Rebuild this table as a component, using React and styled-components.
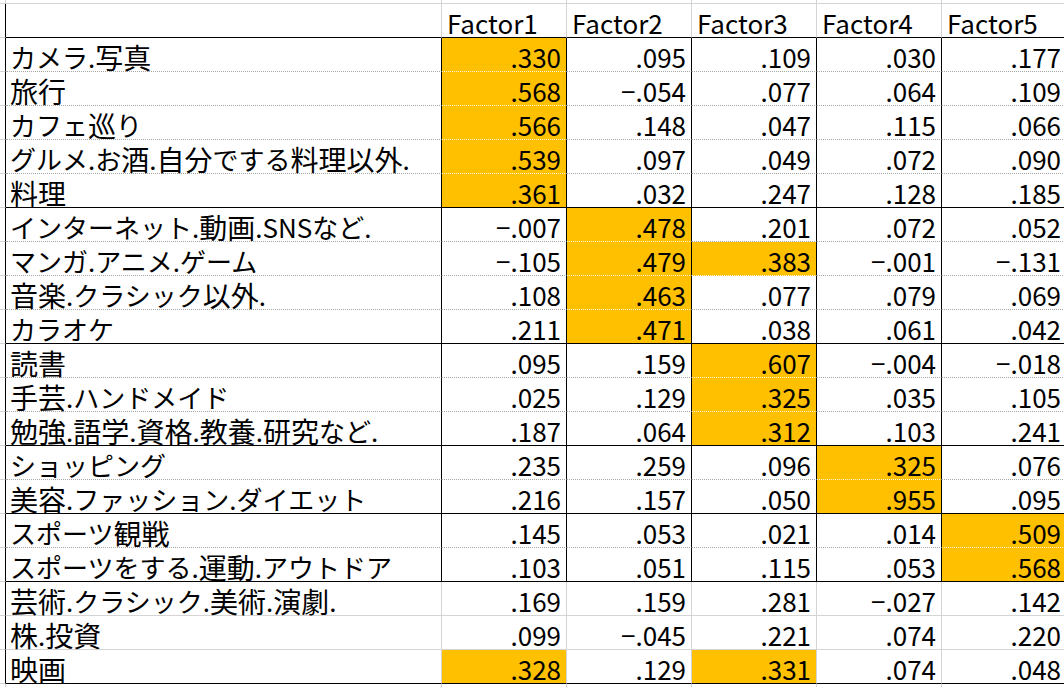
import React from 'react';
import styled, { createGlobalStyle } from 'styled-components';

const Global = createGlobalStyle`
  html, body {
    margin: 0;
    padding: 0;
    background: #fff;
    overflow: hidden;
  }
`;

const GRID = '#d4d4d4';
const DOT = '#a6a6a6';
const GOLD = '#ffc000';

const lineColor = {
  black: '#000',
  gray: GRID,
  dotted: DOT,
};

const Sheet = styled.div`
  width: 1064px;
  height: 687px;
  overflow: hidden;
  display: grid;
  grid-template-columns: 6px 436px repeat(5, 125px);
  grid-template-rows: 4px;
  grid-auto-rows: 34px;
  font-family: 'Noto Sans CJK JP', 'Noto Sans', sans-serif;
  font-size: 26px;
  color: #000;
`;

const Cell = styled.div`
  box-sizing: border-box;
  display: flex;
  align-items: center;
  overflow: visible;
  white-space: nowrap;
  line-height: 1;
  background: ${(p) => (p.$hl ? GOLD : '#fff')};
  border-right: 1px solid ${(p) => lineColor[p.$v || 'gray']};
  border-bottom: 1px ${(p) => (p.$h === 'dotted' ? 'dotted' : 'solid')}
    ${(p) => (p.$h === 'dotted' && p.$hl ? '#fff6dc' : lineColor[p.$h || 'gray'])};
`;

const EdgeCell = styled(Cell)`
  border-bottom-style: solid;
  border-bottom-color: ${GRID};
`;

const HeadCell = styled(Cell)`
  padding: 4px 0 0 5px;
`;

const LabelCell = styled(Cell)`
  padding: 4px 0 0 4px;
`;

const Kanji = styled.span`
  font-size: 28px;
`;

const NumCell = styled(Cell)`
  justify-content: flex-end;
  padding: 4px 5px 0 0;
`;

const factors = ['Factor1', 'Factor2', 'Factor3', 'Factor4', 'Factor5'];

// label, values, highlighted columns
const groups = [
  [
    ['カメラ.写真', ['.330', '.095', '.109', '.030', '.177'], [0]],
    ['旅行', ['.568', '−.054', '.077', '.064', '.109'], [0]],
    ['カフェ巡り', ['.566', '.148', '.047', '.115', '.066'], [0]],
    ['グルメ.お酒.自分でする料理以外.', ['.539', '.097', '.049', '.072', '.090'], [0]],
    ['料理', ['.361', '.032', '.247', '.128', '.185'], [0]],
  ],
  [
    ['インターネット.動画.SNSなど.', ['−.007', '.478', '.201', '.072', '.052'], [1]],
    ['マンガ.アニメ.ゲーム', ['−.105', '.479', '.383', '−.001', '−.131'], [1, 2]],
    ['音楽.クラシック以外.', ['.108', '.463', '.077', '.079', '.069'], [1]],
    ['カラオケ', ['.211', '.471', '.038', '.061', '.042'], [1]],
  ],
  [
    ['読書', ['.095', '.159', '.607', '−.004', '−.018'], [2]],
    ['手芸.ハンドメイド', ['.025', '.129', '.325', '.035', '.105'], [2]],
    ['勉強.語学.資格.教養.研究など.', ['.187', '.064', '.312', '.103', '.241'], [2]],
  ],
  [
    ['ショッピング', ['.235', '.259', '.096', '.325', '.076'], [3]],
    ['美容.ファッション.ダイエット', ['.216', '.157', '.050', '.955', '.095'], [3]],
  ],
  [
    ['スポーツ観戦', ['.145', '.053', '.021', '.014', '.509'], [4]],
    ['スポーツをする.運動.アウトドア', ['.103', '.051', '.115', '.053', '.568'], [4]],
  ],
  [
    ['芸術.クラシック.美術.演劇.', ['.169', '.159', '.281', '−.027', '.142'], []],
    ['株.投資', ['.099', '−.045', '.221', '.074', '.220'], []],
    ['映画', ['.328', '.129', '.331', '.074', '.048'], [0, 2]],
  ],
];

// kanji are set a touch larger than kana, as in the original sheet font
const Label = ({ text }) =>
  text
    .split(/([\u4e00-\u9fff]+)/)
    .filter(Boolean)
    .map((part, i) =>
      /[\u4e00-\u9fff]/.test(part) ? <Kanji key={i}>{part}</Kanji> : part
    );

const Row = ({ label, values, hl, h, v }) => (
  <>
    <EdgeCell $v="black" />
    <LabelCell $h={h} $v={v}>
      <Label text={label} />
    </LabelCell>
    {values.map((n, i) => (
      <NumCell key={i} $h={h} $v={v} $hl={hl.includes(i)}>
        {n}
      </NumCell>
    ))}
  </>
);

const Stub = () => (
  <>
    {Array.from({ length: 7 }).map((_, i) => (
      <Cell key={i} />
    ))}
  </>
);

export default function App() {
  return (
    <>
      <Global />
      <Sheet>
        <Stub />
        <EdgeCell $v="black" />
        <HeadCell $h="black" />
        {factors.map((f) => (
          <HeadCell key={f} $h="black">{f}</HeadCell>
        ))}
        {groups.map((rows, g) => {
          const plain = g === groups.length - 1;
          return rows.map(([label, values, hl], r) => {
            const last = r === rows.length - 1;
            const h = last ? 'black' : plain ? 'gray' : 'dotted';
            return (
              <Row
                key={label}
                label={label}
                values={values}
                hl={hl}
                h={h}
                v={plain ? 'gray' : 'black'}
              />
            );
          });
        })}
        <Stub />
      </Sheet>
    </>
  );
}
